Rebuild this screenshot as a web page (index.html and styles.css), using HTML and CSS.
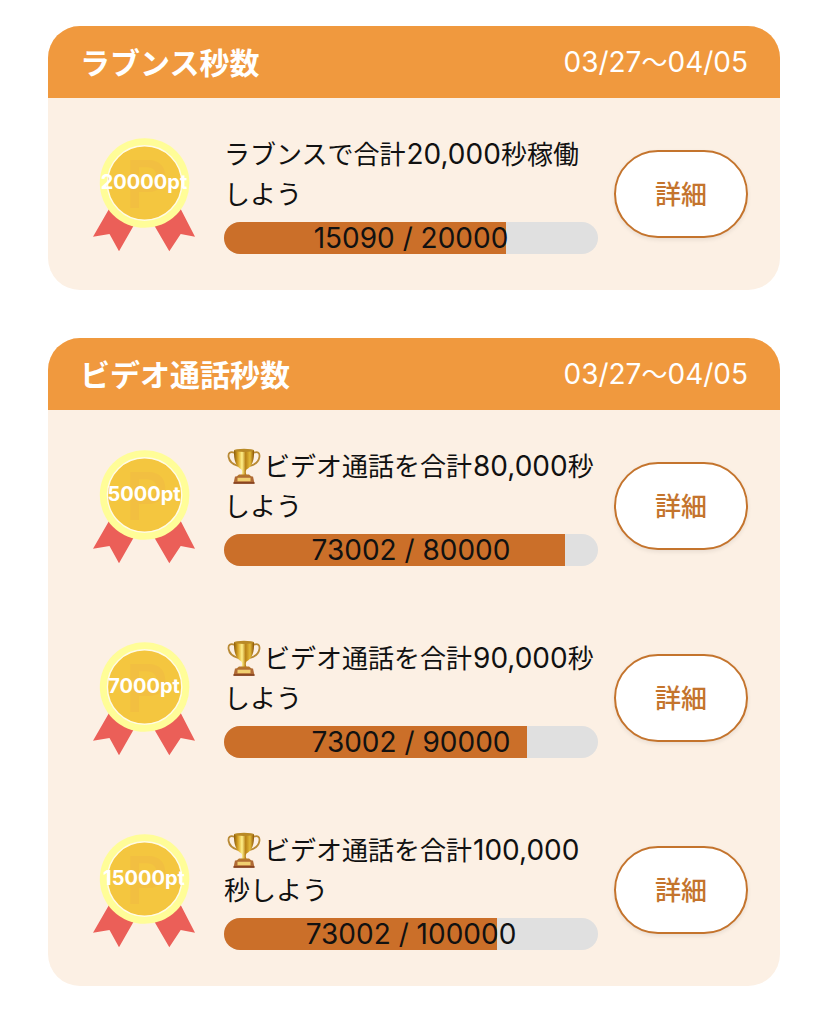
FILE: index.html
```html
<!DOCTYPE html>
<html lang="ja">
<head>
    <meta charset="UTF-8">
    <meta name="viewport" content="width=device-width, initial-scale=1.0">
    <title>ミッション</title>
    <link rel="stylesheet" href="styles.css">
</head>
<body>
    <!-- shared shapes -->
    <svg class="defs" width="0" height="0">
        <defs>
            <linearGradient id="gold" x1="0" x2="1" y1="0" y2="0">
                <stop offset="0" stop-color="#8a5a0c"/>
                <stop offset="0.2" stop-color="#d9a526"/>
                <stop offset="0.4" stop-color="#fff08a"/>
                <stop offset="0.58" stop-color="#b98216"/>
                <stop offset="0.8" stop-color="#e3bb38"/>
                <stop offset="1" stop-color="#8a5208"/>
            </linearGradient>
            <symbol id="medal" viewBox="0 0 104 115">
                <path d="M17 72L1 99.7L17.5 97L27 114.3L42 88Z" fill="#eb5f58"/>
                <path d="M88.7 72L103 99.7L88.7 97L77.3 114.3L62 88Z" fill="#eb5f58"/>
                <circle cx="52.600" cy="46" r="44.800" fill="#fffd98"/>
                <circle cx="52.600" cy="46" r="37.200" fill="#f4c63f" stroke="#fffbe6" stroke-width="1.4"/>
                <text x="33.500" y="71" class="medal-mark">P</text>
            </symbol>
            <symbol id="trophy" viewBox="0 0 34 36">
                <path d="M8 5C3 3 1 5 1.600 9C2.300 13.500 6 16.500 11 18M26 5C31 3 33 5 32.400 9C31.700 13.500 28 16.500 23 18" fill="none" stroke="#b98a35" stroke-width="1.800"/>
                <path d="M7 2H27C27.500 12 25 19 19.500 21.500C18.500 23 18.600 25 20 28H14C15.400 25 15.500 23 14.500 21.500C9 19 6.500 12 7 2Z" fill="url(#gold)"/>
                <ellipse cx="17" cy="2.400" rx="10" ry="1.600" fill="#b98a26"/>
                <path d="M12 26.500H22L25 29H9Z" fill="#b5762a"/>
                <path d="M8 28.500H26L27.500 35.500H6.500Z" fill="#b06a35"/>
                <path d="M10.500 29.700H23.500V33.200H10.500Z" fill="#f0cf70"/>
                <path d="M6.500 34.300H27.500V35.800H6.500Z" fill="#7e3a1a"/>
            </symbol>
        </defs>
    </svg>

    <main class="missions">
        <section class="card">
            <header class="card-header">
                <h2>ラブンス秒数</h2>
                <span class="period">03/27<span class="tilde">〜</span>04/05</span>
            </header>
            <div class="mission">
                <div class="medal">
                    <svg><use href="#medal"/></svg>
                    <span class="point">20000pt</span>
                </div>
                <div class="info">
                    <p>ラブンスで合計<span class="num">20,000</span>秒稼働<br>しよう</p>
                    <div class="bar"><div class="fill" style="width: 75.45%"></div><span>15090 / 20000</span></div>
                </div>
                <button class="detail">詳細</button>
            </div>
        </section>

        <section class="card">
            <header class="card-header">
                <h2>ビデオ通話秒数</h2>
                <span class="period">03/27<span class="tilde">〜</span>04/05</span>
            </header>
            <div class="mission">
                <div class="medal">
                    <svg><use href="#medal"/></svg>
                    <span class="point">5000pt</span>
                </div>
                <div class="info">
                    <p><svg class="trophy"><use href="#trophy"/></svg>ビデオ通話を合計<span class="num">80,000</span>秒<br>しよう</p>
                    <div class="bar"><div class="fill" style="width: 91.25%"></div><span>73002 / 80000</span></div>
                </div>
                <button class="detail">詳細</button>
            </div>
            <div class="mission">
                <div class="medal">
                    <svg><use href="#medal"/></svg>
                    <span class="point">7000pt</span>
                </div>
                <div class="info">
                    <p><svg class="trophy"><use href="#trophy"/></svg>ビデオ通話を合計<span class="num">90,000</span>秒<br>しよう</p>
                    <div class="bar"><div class="fill" style="width: 81.11%"></div><span>73002 / 90000</span></div>
                </div>
                <button class="detail">詳細</button>
            </div>
            <div class="mission">
                <div class="medal">
                    <svg><use href="#medal"/></svg>
                    <span class="point">15000pt</span>
                </div>
                <div class="info">
                    <p><svg class="trophy"><use href="#trophy"/></svg>ビデオ通話を合計<span class="num">100,000</span><br>秒しよう</p>
                    <div class="bar"><div class="fill" style="width: 73%"></div><span>73002 / 100000</span></div>
                </div>
                <button class="detail">詳細</button>
            </div>
        </section>
    </main>
</body>
</html>
```
FILE: styles.css
```css
* {
    box-sizing: border-box;
}

body {
    margin: 0;
    background-color: #fff;
    color: #111;
    font-family: Inter, "Noto Sans CJK JP", sans-serif;
}

.defs {
    position: absolute;
}

.missions {
    display: flex;
    flex-direction: column;
    gap: 48px;
    width: 732px;
    margin: 26px 0 0 48px;
}

.card {
    border-radius: 32px;
    overflow: hidden;
    background-color: #fcf0e4;
}

.card-header {
    display: flex;
    justify-content: space-between;
    align-items: center;
    height: 72px;
    padding: 0 32px;
    background-color: #f0993e;
    color: #fff;
}

.card-header h2 {
    margin: 0;
    padding-top: 1px;
    font-size: 30px;
    font-weight: 700;
    line-height: 40px;
}

.period {
    padding-top: 1px;
    font-size: 28px;
    line-height: 40px;
}

.tilde {
    font-size: 26px;
}

.mission {
    display: flex;
    align-items: center;
    height: 192px;
    padding: 0 32px 0 44px;
}

.medal {
    position: relative;
    width: 104px;
    height: 115px;
    margin-right: 28px;
}

.medal svg {
    display: block;
    width: 104px;
    height: 115px;
}

.medal-mark {
    font-size: 66px;
    font-weight: 600;
    fill: #f2bf41;
}

.point {
    position: absolute;
    top: 33px;
    left: 50%;
    transform: translateX(-50%);
    font-size: 20px;
    font-weight: 700;
    line-height: 24px;
    color: #fff;
}

.info {
    width: 374px;
    margin-right: 16px;
}

.info p {
    margin: 0 0 8px;
    padding-top: 1px;
    font-size: 26px;
    line-height: 40px;
    height: 80px;
    white-space: nowrap;
}

.num {
    margin-left: 1px;
    font-size: 28px;
    line-height: 1;
}

.trophy {
    width: 34px;
    height: 36px;
    margin: 0 3px 0 3px;
    vertical-align: -8px;
}

.bar {
    position: relative;
    height: 32px;
    border-radius: 16px;
    overflow: hidden;
    background-color: #e0e0e0;
}

.fill {
    height: 100%;
    background-color: #cb6f29;
}

.bar span {
    position: absolute;
    inset: 0;
    font-size: 28px;
    line-height: 32px;
    text-align: center;
}

.detail {
    width: 134px;
    height: 88px;
    padding: 0 0 3px;
    border: 2px solid #c4742d;
    border-radius: 44px;
    background-color: #fff;
    box-shadow: 0 2px 4px rgba(0, 0, 0, 0.08);
    color: #c4742d;
    font-family: inherit;
    font-size: 26px;
    font-weight: 500;
}
```
